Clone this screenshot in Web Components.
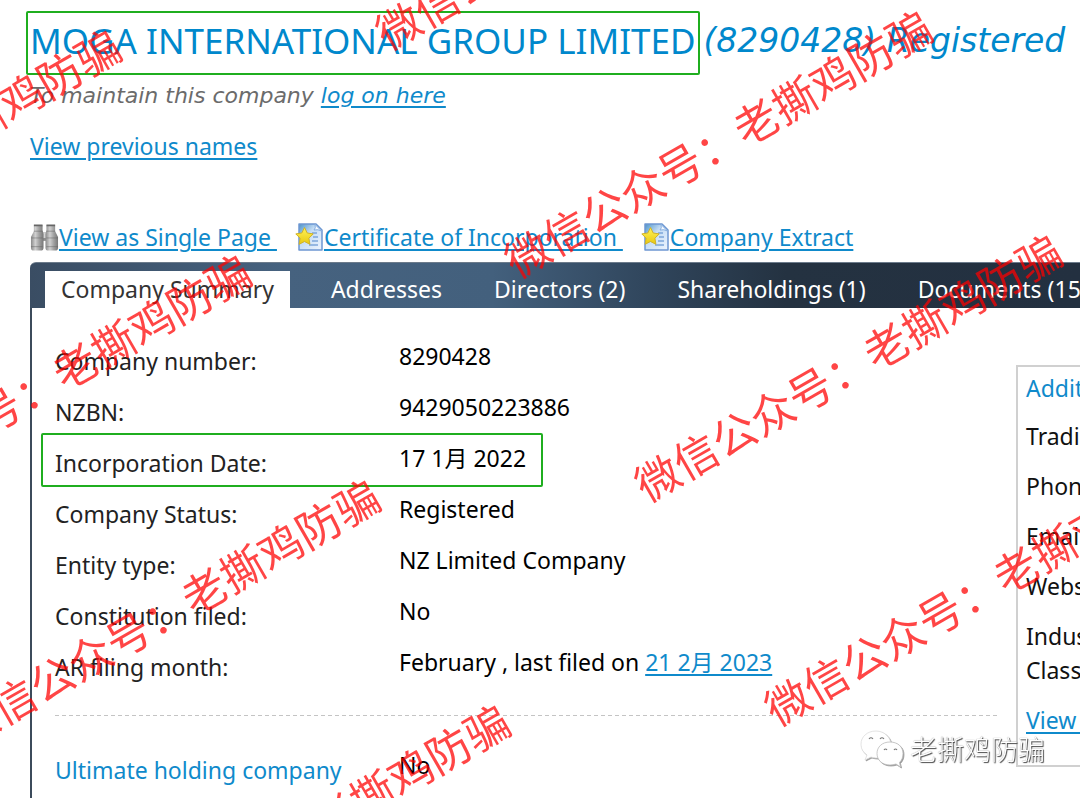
<!DOCTYPE html>
<html lang="en">
<head>
<meta charset="utf-8">
<meta name="viewport" content="width=device-width, initial-scale=1">
<title>MOGA INTERNATIONAL GROUP LIMITED</title>
<style>
  html, body { margin: 0; height: 100%; overflow: hidden; background: #fff; }
  body { font-family: "Noto Sans", "Noto Sans CJK SC", sans-serif; font-size: 23px; line-height: 34px; color: #1a1a1a; }
</style>
</head>
<body>
<register-page></register-page>

<script>
const define = (name, html) => {
  const t = document.createElement('template');
  t.innerHTML = html;
  customElements.define(name, class extends HTMLElement {
    constructor() {
      super();
      this.attachShadow({ mode: 'open' }).appendChild(t.content.cloneNode(true));
    }
  });
};

define('text-link', `
  <style>
    :host { display: inline; }
    a { color: #0f8acb; text-decoration: underline; text-decoration-thickness: 2px; text-underline-offset: 3px; white-space: pre; }
  </style>
  <a href="#"><slot></slot></a>`);

define('company-header', `
  <style>
    :host { display: block; padding: 11px 0 0 26px; white-space: nowrap; }
    h1 { display: flex; align-items: center; gap: 4px; margin: 0; font-size: 35px; line-height: 56px; font-weight: 400; color: #0088cc; }
    .name { border: 2px solid #1fae1f; border-radius: 2px; padding: 0 2px 4px; }
    em { padding-bottom: 4px; font-family: "DejaVu Sans", sans-serif; font-size: 33px; }
    p { margin: 4px 0 0 4px; color: #6b6b6b; }
    .hint { font-family: "DejaVu Sans", sans-serif; font-size: 22px; font-style: italic; }
    .previous { margin-top: 16px; }
  </style>
  <h1><span class="name"><slot name="name"></slot></span><em><slot name="status"></slot></em></h1>
  <p class="hint">To maintain this company <text-link>log on here</text-link></p>
  <p class="previous"><text-link>View previous names</text-link></p>`);

define('binoculars-icon', `
  <style>:host { display: block; } svg { display: block; }</style>
  <svg width="29" height="28" viewBox="0 0 30 28" aria-hidden="true">
    <defs><linearGradient id="g"><stop offset="0" stop-color="#8a8a8a"/><stop offset=".35" stop-color="#d0d0d0"/><stop offset=".65" stop-color="#a2a2a2"/><stop offset="1" stop-color="#777"/></linearGradient></defs>
    <path d="M11 9h8v9h-8z" fill="#8d8d8d"/>
    <path d="M13.500 9h3v6h-3z" fill="#d6d6d6"/>
    <path d="M4 2h9v5l1 4v14q0 3-3 3H4q-3 0-3-3V14l3-6z" fill="url(#g)"/>
    <path d="M17 2h9v6l3 6v11q0 3-3 3h-7q-3 0-3-3V11l1-4z" fill="url(#g)"/>
    <path d="M4 8h9M17 8h9M1.500 15H13M17 15h12M1 24h12M17 24h12" stroke="#5f5f5f" stroke-opacity=".5" fill="none"/>
    <path d="M4 2h9M17 2h9" stroke="#666" stroke-width="2"/>
  </svg>`);

define('certificate-icon', `
  <style>:host { display: block; } svg { display: block; }</style>
  <svg width="29" height="28" viewBox="0 0 29 28" aria-hidden="true">
    <defs>
      <linearGradient id="p" x2="1" y2="1"><stop offset="0" stop-color="#4c94c8"/><stop offset=".4" stop-color="#c4dcf5"/><stop offset="1" stop-color="#eef5ff"/></linearGradient>
      <linearGradient id="s" x2="0" y2="1"><stop offset="0" stop-color="#fff35a"/><stop offset="1" stop-color="#e8c80f"/></linearGradient>
    </defs>
    <path d="M4 1h17l6 6v20H4z" fill="url(#p)" stroke="#6d97d2" stroke-width="1.500" stroke-linejoin="round"/>
    <path d="M20 1.500q1 4-1 5.500 4-1 7.500 1z" fill="#f4f9ff" stroke="#87afe0"/>
    <path d="M17 10h5M18 14h5M17 18h6M14 22h9" stroke="#7ea6da" stroke-width="1.600"/>
    <path d="M9.500 4.500l2.700 5.500 6 .9-4.300 4.300 1 6.100-5.400-2.800-5.400 2.800 1-6.100L.8 10.900l6-.9z" fill="url(#s)" stroke="#d0b228" stroke-linejoin="round"/>
  </svg>`);

define('action-bar', `
  <style>
    :host { display: flex; align-items: center; gap: 18px; margin: 57px 0 0 30px; white-space: nowrap; }
    span { display: flex; align-items: center; }
  </style>
  <span><binoculars-icon></binoculars-icon><text-link>View as Single Page </text-link></span>
  <span><certificate-icon></certificate-icon><text-link>Certificate of Incorporation </text-link></span>
  <span><certificate-icon></certificate-icon><text-link>Company Extract</text-link></span>`);

define('tab-bar', `
  <style>
    :host { display: block; box-sizing: border-box; height: 46px; padding: 8px 0 0 15px; border-top: 1px solid #6c7b8b; border-radius: 6px 0 0 0;
      background: linear-gradient(90deg, #3a4d63 0, #46627f 24%, #43607d 44%, #2f445a 60%, #243241 72%, #233040 100%); }
    nav { display: flex; align-items: stretch; white-space: nowrap; }
    a { padding: 0 26px; line-height: 36px; padding-bottom: 1px; color: #fff; text-decoration: none; }
    a.active { margin-right: 15px; padding: 0 16px 1px; background: #fff; color: #333; }
  </style>
  <nav>
    <a class="active" href="#summary" aria-current="page">Company Summary</a>
    <a href="#addresses">Addresses</a>
    <a href="#directors">Directors (2)</a>
    <a href="#shareholdings">Shareholdings (1)</a>
    <a href="#documents">Documents (15)</a>
  </nav>`);

define('detail-row', `
  <style>
    :host { display: grid; grid-template-columns: 344px 1fr; position: relative; line-height: 51px; white-space: nowrap; }
    .label { padding-top: 10px; line-height: 41px; color: #222; }
    .value { color: #000; }
    :host([heading]) .label { color: #0f8acb; }
    :host([marked])::after { content: ""; position: absolute; box-sizing: border-box; left: -14px; top: 0; width: 502px; height: 54px; border: 2px solid #1fae1f; border-radius: 2px; }
  </style>
  <div class="label"><slot name="label"></slot></div>
  <div class="value"><slot></slot></div>`);

define('side-panel', `
  <style>
    :host { display: block; flex: 0 0 64px; box-sizing: border-box; border: 2px solid #d0d0d0; border-right: 0; overflow: hidden; white-space: nowrap; padding: 4px 0 28px 8px; color: #111; }
    h2 { margin: 0; font: inherit; color: #0f8acb; }
    p { margin: 16px 0 0; }
    h2 + p { margin-top: 14px; }
  </style>
  <h2>Additional</h2>
  <p>Trading</p><p>Phone</p><p>Email</p><p>Website</p>
  <p>Industry<br>Classification</p>
  <p><text-link>View all</text-link></p>`);

define('summary-panel', `
  <style>
    :host { display: flex; align-items: flex-start; gap: 16px; box-sizing: border-box; border-left: 2px solid #3c4b5b; padding: 23px 0 60px 23px; }
    section { flex: 1; min-width: 0; }
    hr { margin: 27px 0 24px; border: 0; height: 1px; background: repeating-linear-gradient(90deg, #c4c4c4 0 4px, transparent 4px 7px); }
    side-panel { margin-top: 34px; }
  </style>
  <section>
    <detail-row><span slot="label">Company number:</span>8290428</detail-row>
    <detail-row><span slot="label">NZBN:</span>9429050223886</detail-row>
    <detail-row marked><span slot="label">Incorporation Date:</span>17 1月 2022</detail-row>
    <detail-row><span slot="label">Company Status:</span>Registered</detail-row>
    <detail-row><span slot="label">Entity type:</span>NZ Limited Company</detail-row>
    <detail-row><span slot="label">Constitution filed:</span>No</detail-row>
    <detail-row><span slot="label">AR filing month:</span>February , last filed on <text-link>21 2月 2023</text-link></detail-row>
    <hr>
    <detail-row heading><span slot="label">Ultimate holding company</span>No</detail-row>
  </section>
  <side-panel></side-panel>`);

/* Diagonal stamps scattered over the page; each is centred on its own point. */
customElements.define('stamp-layer', class extends HTMLElement {
  constructor() {
    super();
    const points = [[-94, 161], [36, 386], [165, 611], [295, 836], [588, -86], [717, 142], [847, 366], [977, 590]];
    this.attachShadow({ mode: 'open' }).innerHTML = `
      <style>
        :host { display: block; position: fixed; inset: 0; overflow: hidden; pointer-events: none; }
        span { position: absolute; transform: translate(-50%, -50%) rotate(-30deg); font: 44px/60px "Noto Sans CJK SC", sans-serif; color: rgba(255, 0, 0, .73); white-space: nowrap; }
      </style>
      ${points.map(([x, y]) => `<span lang="zh-CN" style="left:${x}px;top:${y}px">微信公众号：老撕鸡防骗</span>`).join('')}`;
  }
});

define('account-badge', `
  <style>
    :host { display: flex; align-items: center; gap: 6px; position: fixed; right: 35px; bottom: 29px; font: 27px/40px "Noto Sans CJK SC", sans-serif; font-weight: 300; color: #fff; text-shadow: 1px 1px 1px #444, 0 0 1px #888; white-space: nowrap; }
    svg { filter: drop-shadow(1px 1px 0 #999); }
  </style>
  <svg width="44" height="38" viewBox="0 0 44 38" aria-hidden="true">
    <path d="M16 1C7 1 1 7 1 14c0 5 2 8 6 11l-2 5 6-3c2 .7 4 1 7 1 8 0 13-6 13-13S25 1 16 1z" fill="#fff" stroke="#ddd" stroke-width=".8"/>
    <path d="M30 12c-8 0-13 5-13 11.500S22 35 30 35c2 0 4-.3 6-1l4.500 3-1-4.500C42 30 43 27 43 23.500 43 17 38 12 30 12z" fill="#fff" stroke="#bbb" stroke-width=".8"/>
    <path d="M9 9q2-2.500 4 0M20 9q2-2.500 4 0M24 20q1.500-2 3 0M34 20q1.500-2 3 0" fill="none" stroke="#777" stroke-width="1.200"/>
  </svg>
  <span lang="zh-CN">老撕鸡防骗</span>`);

define('register-page', `
  <style>
    :host { display: block; height: 100%; overflow: hidden; }
    main { margin-left: 30px; margin-top: 8px; }
  </style>
  <company-header>
    <span slot="name">MOGA INTERNATIONAL GROUP LIMITED</span>
    <span slot="status">(8290428) Registered</span>
  </company-header>
  <action-bar></action-bar>
  <main>
    <tab-bar></tab-bar>
    <summary-panel></summary-panel>
  </main>
  <stamp-layer></stamp-layer>
  <account-badge></account-badge>`);
</script>
</body>
</html>
